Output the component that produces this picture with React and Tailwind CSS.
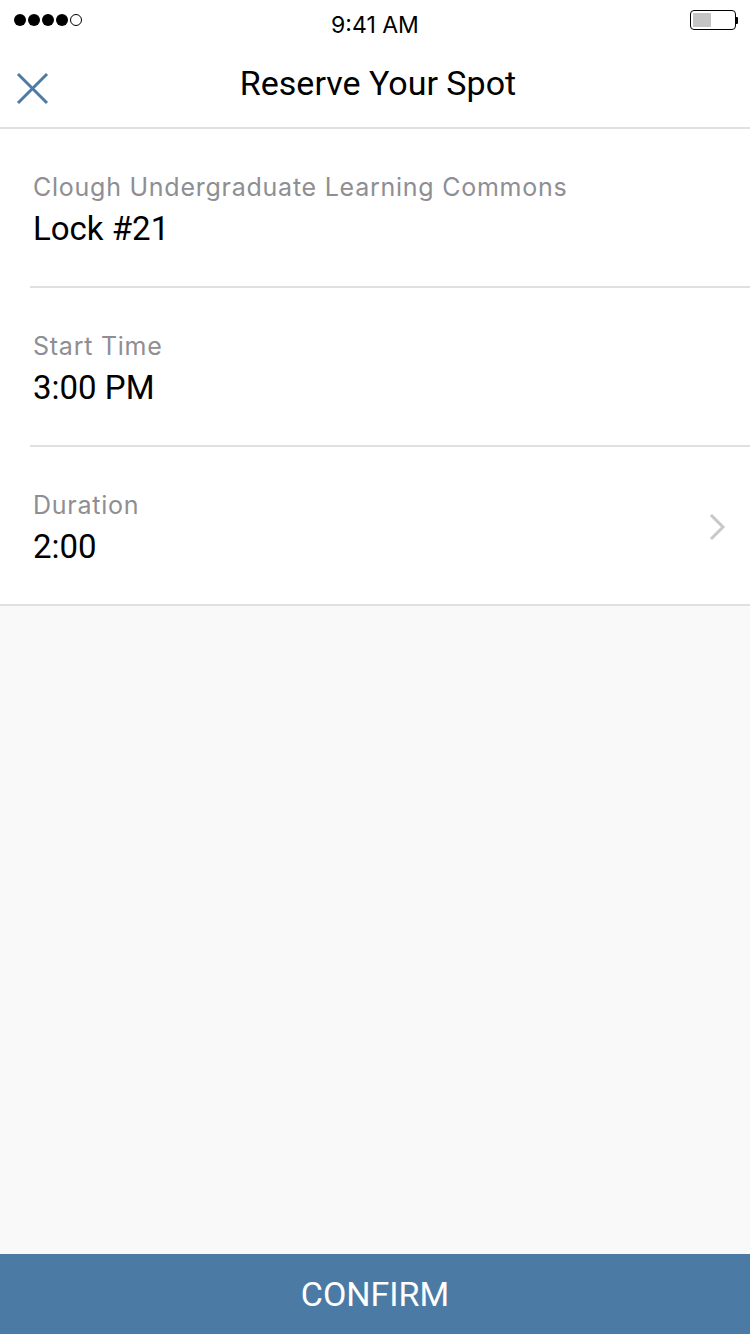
function StatusBar() {
  return (
    <div className="relative flex h-[40px] items-center justify-between px-[14px]">
      <div className="flex items-center gap-[2px]">
        {[0, 1, 2, 3].map((i) => (
          <span key={i} className="h-[12px] w-[12px] rounded-full bg-black" />
        ))}
        <span className="h-[12px] w-[12px] rounded-full border border-black" />
      </div>
      <span className="absolute left-1/2 top-[10px] -translate-x-1/2 font-['Inter'] text-[23px] leading-[30px] text-black">
        9:41 AM
      </span>
      <div className="mr-[-2px] flex items-center">
        <div className="flex h-[20px] w-[46px] items-center rounded-[4px] border-[1.5px] border-black p-[2px]">
          <div className="h-full w-[18px] rounded-[1px] bg-[#c4c4c4]" />
        </div>
        <div className="h-[7px] w-[2px] rounded-r-[1px] bg-black" />
      </div>
    </div>
  );
}

function Row({ label, value, inset = true, chevron = false }) {
  return (
    <div className="relative flex h-[159px] items-center bg-white pl-[33px] pr-[24px]">
      <div className="flex flex-1 flex-col pt-[3px]">
        <span className="font-['Inter'] text-[25px] leading-[32px] tracking-[0.75px] text-[#8e8e93]">
          {label}
        </span>
        <span className="mt-[6px] text-[33px] leading-[40px] text-black">{value}</span>
      </div>
      {chevron && (
        <svg width="18" height="28" viewBox="0 0 18 28" fill="none" stroke="#c7c7cc" strokeWidth="3">
          <path d="M3 2 L15 14 L3 26" />
        </svg>
      )}
      <div
        className={`absolute bottom-0 right-0 h-[2px] bg-[#e0e0e0] ${inset ? "left-[30px]" : "left-0"}`}
      />
    </div>
  );
}

export default function App() {
  return (
    <div
      className="flex h-[1334px] w-[750px] flex-col bg-[#f9f9f9]"
      style={{ fontFamily: "Roboto, 'Liberation Sans', sans-serif" }}
    >
      <div className="bg-white">
        <StatusBar />
        <div className="relative flex h-[89px] items-center justify-center border-b-2 border-[#e0e0e0]">
          <svg
            className="absolute left-[16px] top-[32px]"
            width="33"
            height="33"
            viewBox="0 0 33 33"
            fill="none"
            stroke="#4e7ba4"
            strokeWidth="3"
          >
            <path d="M2 2 L31 31 M31 2 L2 31" />
          </svg>
          <span className="ml-[6px] text-[34px] text-black">Reserve Your Spot</span>
        </div>
      </div>

      <Row label="Clough Undergraduate Learning Commons" value="Lock #21" />
      <Row label="Start Time" value="3:00 PM" />
      <Row label="Duration" value="2:00" inset={false} chevron />

      <div className="flex-1" />

      <button className="flex h-[80px] w-full items-center justify-center bg-[#4b7ba5] text-[34px] text-white">
        CONFIRM
      </button>
    </div>
  );
}
